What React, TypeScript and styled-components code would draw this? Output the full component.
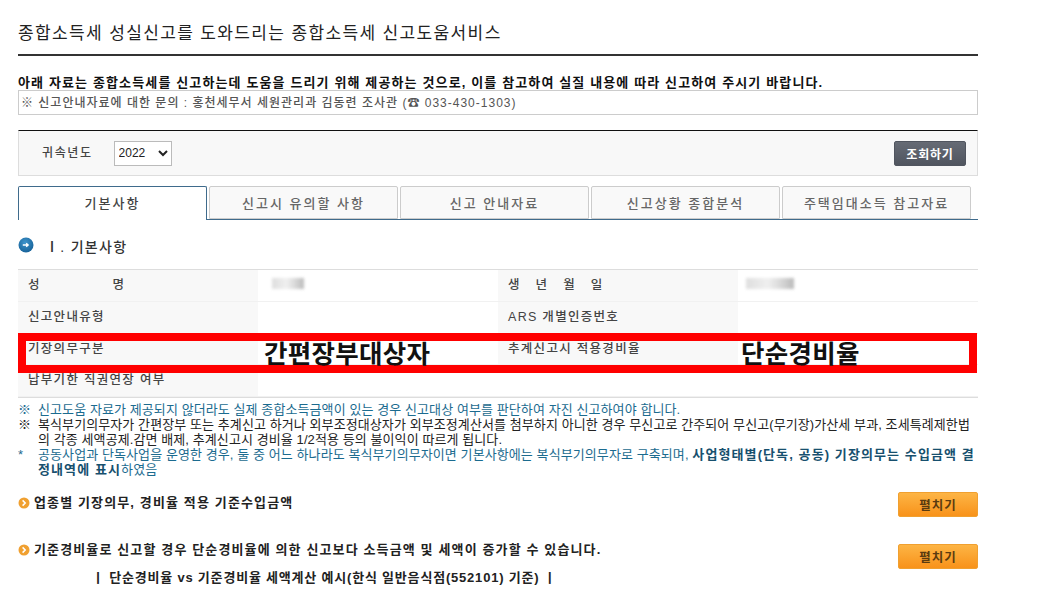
import React from "react";
import styled, { createGlobalStyle } from "styled-components";

const Global = createGlobalStyle`
    html, body {
        margin: 0;
        padding: 0;
        background: #fff;
        overflow: hidden;
    }
    body {
        font-family: "Liberation Sans", "Noto Sans CJK KR", sans-serif;
        color: #333;
    }
`

const Page = styled.div`
    width: 960px;
    height: 600px;
    margin-left: 18px;
    padding-top: 21px;
    box-sizing: border-box;
    overflow: hidden;
`

const Title = styled.h1`
    margin: 0;
    height: 33px;
    line-height: 25px;
    font-size: 17px;
    font-weight: 400;
    letter-spacing: 1.37px;
    color: #222;
    border-bottom: 2px solid #333;
`

const Lead = styled.p`
    margin: 19px 0 0;
    height: 15px;
    line-height: 15px;
    font-size: 13px;
    font-weight: 700;
    letter-spacing: 1.13px;
    color: #111;
    white-space: nowrap;
`

const Inquiry = styled.div`
    height: 25px;
    line-height: 23px;
    padding: 1px 0 0 2px;
    box-sizing: border-box;
    border: 1px solid #ccc;
    font-size: 12px;
    font-weight: 500;
    letter-spacing: 1px;
    color: #555;
`

const SearchBar = styled.div`
    display: flex;
    align-items: center;
    height: 46px;
    margin-top: 15px;
    padding: 0 11px 0 23px;
    box-sizing: border-box;
    border: 1px solid #ddd;
    border-top: 1px solid #111;
    background: #f8f8f8;
`

const SearchLabel = styled.span`
    padding-bottom: 3px;
    font-size: 12px;
    font-weight: 500;
    letter-spacing: 1.6px;
    color: #444;
`

const YearSelect = styled.select`
    width: 58px;
    height: 25px;
    margin-left: 21px;
    font-family: "Liberation Sans", sans-serif;
    font-size: 12px;
    color: #222;
    background: #fff;
    border: 1px solid #bbb;
    border-radius: 0;
`

const SearchButton = styled.button`
    width: 72px;
    height: 25px;
    margin-left: auto;
    padding: 0;
    border: 1px solid #50555f;
    border-radius: 2px;
    background: linear-gradient(#666b75, #50555f);
    color: #fff;
    font-family: inherit;
    font-size: 12px;
    font-weight: 700;
    letter-spacing: 0.8px;
`

const Tabs = styled.div`
    display: flex;
    gap: 2px;
    height: 33px;
    margin-top: 10px;
    border-bottom: 1px solid #3f6b8c;
`

const Tab = styled.div<{ $active?: boolean }>`
    width: 189px;
    height: ${p => (p.$active ? "34px" : "33px")};
    box-sizing: border-box;
    border: 1px solid ${p => (p.$active ? "#3f6b8c" : "#ccc")};
    border-bottom: ${p => (p.$active ? "none" : "1px solid #ccc")};
    border-radius: 2px 2px 0 0;
    background: ${p => (p.$active ? "#fff" : "#f9f9f9")};
    text-align: center;
    line-height: 33px;
    font-size: 13px;
    font-weight: 500;
    letter-spacing: 2px;
    color: ${p => (p.$active ? "#444" : "#666")};
`

const SectionHead = styled.div`
    display: flex;
    align-items: center;
    height: 20px;
    margin-top: 15px;
`

const SectionTitle = styled.h2`
    margin: 1px 0 0 11px;
    font-size: 14px;
    font-weight: 500;
    letter-spacing: 1.3px;
    color: #333;
`

const InfoTable = styled.div`
    position: relative;
    display: grid;
    grid-template-columns: repeat(4, 240px);
    grid-auto-rows: 31.75px;
    margin-top: 14px;
    border-top: 1px solid #ddd;
    border-bottom: 1px solid #ddd;
`

const HeadCell = styled.div<{ $spread?: number; $raised?: boolean }>`
    padding: ${p => (p.$raised ? "0 0 3px 10px" : "0 0 4px 10px")};
    box-sizing: border-box;
    display: flex;
    align-items: center;
    background: #f8f8f8;
    border-bottom: 1px solid #f1f1f1;
    white-space: pre;
    font-size: 12.5px;
    font-weight: 500;
    letter-spacing: 1.3px;
    word-spacing: ${p => p.$spread ?? 0}px;
    color: #444;
`

const ValueCell = styled.div<{ $pad?: number }>`
    padding-left: ${p => p.$pad ?? 6}px;
    box-sizing: border-box;
    display: flex;
    align-items: center;
    border-bottom: 1px solid #f1f1f1;
`

const BigValue = styled.span`
    position: relative;
    z-index: 1;
    padding-top: 5px;
    font-size: 25.5px;
    font-weight: 700;
    color: #111;
    letter-spacing: 0.3px;
`

const Blurred = styled.span<{ $w: number; $x: number }>`
    display: block;
    width: ${p => p.$w}px;
    height: 11px;
    margin: 0 0 4px ${p => p.$x}px;
    background: linear-gradient(90deg, #d6d6d6, #ececec 45%, #d2d2d2 70%, #aaa);
    filter: blur(1.5px);
    opacity: 0.8;
`

const RedFrame = styled.div`
    position: absolute;
    left: 0;
    top: 63px;
    width: 959px;
    height: 40px;
    box-sizing: border-box;
    border: 8px solid #f00;
`

const Notes = styled.div`
    margin-top: 4px;
`

const Note = styled.div<{ $dark?: boolean }>`
    display: grid;
    grid-template-columns: 20px 1fr;
    line-height: 15px;
    font-size: 13px;
    letter-spacing: 0.09px;
    color: ${p => (p.$dark ? "#222" : "#1b6b8f")};
`

const NoteLine = styled.div`
    white-space: nowrap;
`

const Strong = styled.strong`
    font-weight: 700;
    letter-spacing: 1.1px;
    color: #17506e;
`

const Subhead = styled.div`
    display: flex;
    align-items: flex-start;
    height: 26px;
`

const FirstSub = styled(Subhead)`
    margin-top: 15px;
`

const SecondSub = styled(Subhead)`
    margin-top: 26px;
`

const SubGroup = styled.div<{ $top: number }>`
    display: flex;
    align-items: center;
    margin-top: ${p => p.$top}px;
`

const SubTitle = styled.span`
    margin-left: 4px;
    line-height: 19px;
    font-size: 13px;
    font-weight: 700;
    letter-spacing: 1.13px;
    color: #222;
    white-space: nowrap;
`

const OpenButton = styled.button`
    width: 80px;
    height: 25px;
    margin-left: auto;
    padding: 0;
    border: 1px solid #f0a030;
    border-radius: 2px;
    background: linear-gradient(#fdb545, #f8921a);
    color: #5a3b10;
    font-family: inherit;
    font-size: 12.5px;
    font-weight: 700;
    letter-spacing: 1px;
`

const Caption = styled.div`
    margin: -3px 0 0 74px;
    font-size: 13px;
    font-weight: 700;
    letter-spacing: 0.8px;
    color: #222;
    white-space: nowrap;
`

function CircleArrow() {
    return (
        <svg width="16" height="16" viewBox="0 0 16 16">
            <defs>
                <radialGradient id="blueBall" cx="45%" cy="35%" r="70%">
                    <stop offset="0%" stopColor="#3f95cc" />
                    <stop offset="100%" stopColor="#155f96" />
                </radialGradient>
            </defs>
            <circle cx="8" cy="8" r="7.5" fill="url(#blueBall)" />
            <path d="M4.8 8h5.4M8.2 6.2 10.2 8 8.2 9.8" stroke="#fff" strokeWidth="1.3" fill="none" />
        </svg>
    )
}

function Bullet() {
    return (
        <svg width="12" height="12" viewBox="0 0 12 12">
            <circle cx="6" cy="6" r="5.5" fill="#f0a030" />
            <path d="M4.6 3.4 7.2 6 4.6 8.6" stroke="#fff" strokeWidth="1.5" fill="none" />
        </svg>
    )
}

const tabs = ["기본사항", "신고시 유의할 사항", "신고 안내자료", "신고상황 종합분석", "주택임대소득 참고자료"]

export default function App() {
    return (
        <Page>
            <Global />
            <Title>종합소득세 성실신고를 도와드리는 종합소득세 신고도움서비스</Title>
            <Lead>아래 자료는 종합소득세를 신고하는데 도움을 드리기 위해 제공하는 것으로, 이를 참고하여 실질 내용에 따라 신고하여 주시기 바랍니다.</Lead>
            <Inquiry>※ 신고안내자료에 대한 문의 : 홍천세무서 세원관리과 김동련 조사관 (☎ 033-430-1303)</Inquiry>
            <SearchBar>
                <SearchLabel>귀속년도</SearchLabel>
                <YearSelect defaultValue="2022">
                    <option>2022</option>
                    <option>2021</option>
                    <option>2020</option>
                </YearSelect>
                <SearchButton>조회하기</SearchButton>
            </SearchBar>
            <Tabs>
                {tabs.map((t, i) => (
                    <Tab key={t} $active={i === 0}>{t}</Tab>
                ))}
            </Tabs>
            <SectionHead>
                <CircleArrow />
                <SectionTitle>Ⅰ. 기본사항</SectionTitle>
            </SectionHead>
            <InfoTable>
                <HeadCell $spread={67}>성 명</HeadCell>
                <ValueCell><Blurred $w={32} $x={8} /></ValueCell>
                <HeadCell $spread={10}>생 년 월 일</HeadCell>
                <ValueCell $pad={3}><Blurred $w={48} $x={5} /></ValueCell>

                <HeadCell>신고안내유형</HeadCell>
                <ValueCell />
                <HeadCell>ARS 개별인증번호</HeadCell>
                <ValueCell />

                <HeadCell $raised>기장의무구분</HeadCell>
                <ValueCell><BigValue>간편장부대상자</BigValue></ValueCell>
                <HeadCell $raised>추계신고시 적용경비율</HeadCell>
                <ValueCell $pad={3}><BigValue>단순경비율</BigValue></ValueCell>

                <HeadCell>납부기한 직권연장 여부</HeadCell>
                <ValueCell />
                <ValueCell />
                <ValueCell />
                <RedFrame />
            </InfoTable>
            <Notes>
                <Note>
                    <span>※</span>
                    <NoteLine>신고도움 자료가 제공되지 않더라도 실제 종합소득금액이 있는 경우 신고대상 여부를 판단하여 자진 신고하여야 합니다.</NoteLine>
                </Note>
                <Note $dark>
                    <span>※</span>
                    <div>
                        <NoteLine>복식부기의무자가 간편장부 또는 추계신고 하거나 외부조정대상자가 외부조정계산서를 첨부하지 아니한 경우 무신고로 간주되어 무신고(무기장)가산세 부과, 조세특례제한법</NoteLine>
                        <NoteLine>의 각종 세액공제.감면 배제, 추계신고시 경비율 1/2적용 등의 불이익이 따르게 됩니다.</NoteLine>
                    </div>
                </Note>
                <Note>
                    <span>*</span>
                    <div>
                        <NoteLine>공동사업과 단독사업을 운영한 경우, 둘 중 어느 하나라도 복식부기의무자이면 기본사항에는 복식부기의무자로 구축되며, <Strong>사업형태별(단독, 공동) 기장의무는 수입금액 결</Strong></NoteLine>
                        <NoteLine><Strong>정내역에 표시</Strong>하였음</NoteLine>
                    </div>
                </Note>
            </Notes>
            <FirstSub>
                <SubGroup $top={1}>
                    <Bullet />
                    <SubTitle>업종별 기장의무, 경비율 적용 기준수입금액</SubTitle>
                </SubGroup>
                <OpenButton>펼치기</OpenButton>
            </FirstSub>
            <SecondSub>
                <SubGroup $top={-4}>
                    <Bullet />
                    <SubTitle>기준경비율로 신고할 경우 단순경비율에 의한 신고보다 소득금액 및 세액이 증가할 수 있습니다.</SubTitle>
                </SubGroup>
                <OpenButton>펼치기</OpenButton>
            </SecondSub>
            <Caption>ㅣ 단순경비율 vs 기준경비율 세액계산 예시(한식 일반음식점(552101) 기준) ㅣ</Caption>
        </Page>
    )
}
